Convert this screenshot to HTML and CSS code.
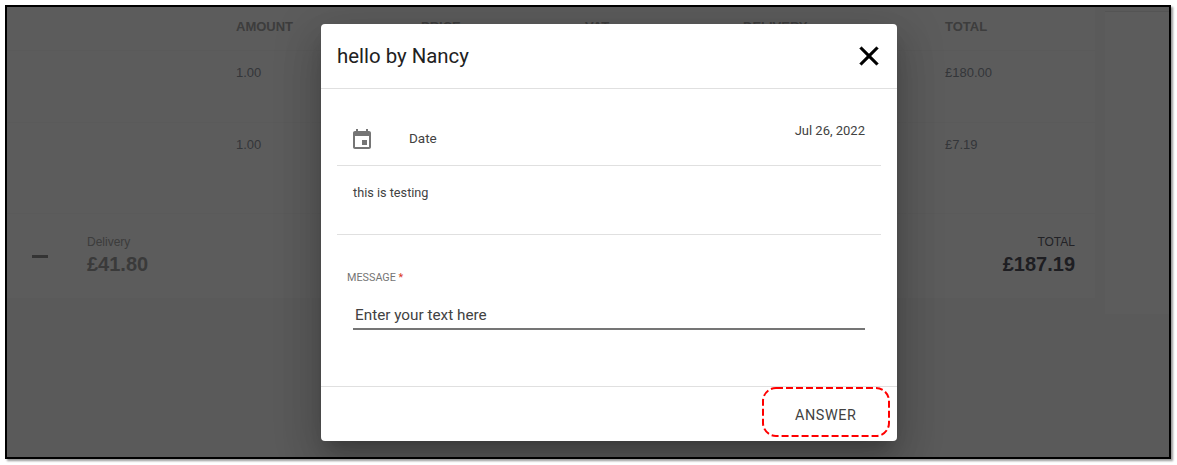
FILE: index.html
```html
<!DOCTYPE html>
<html lang="en">
<head>
<meta charset="utf-8">
<title>Message</title>
<link rel="stylesheet" href="styles.css">
</head>
<body>
<div class="frame">
  <div class="page">
    <main class="card">
      <div class="row row-head">
        <span></span><span>AMOUNT</span><span>PRICE</span><span>VAT</span><span>DELIVERY</span><span>TOTAL</span>
      </div>
      <div class="row row-item">
        <span></span><span>1.00</span><span></span><span></span><span></span><span>£180.00</span>
      </div>
      <div class="row row-item">
        <span></span><span>1.00</span><span></span><span></span><span></span><span>£7.19</span>
      </div>
      <div class="summary">
        <span class="minus"></span>
        <div class="sum-block">
          <div class="sum-label">Delivery</div>
          <div class="sum-value">£41.80</div>
        </div>
        <div class="sum-block sum-total">
          <div class="sum-label">TOTAL</div>
          <div class="sum-value">£187.19</div>
        </div>
      </div>
    </main>
    <aside class="side"></aside>
  </div>
  <div class="overlay"></div>
  <section class="dialog">
    <header class="dialog-head">
      <h2 class="dialog-title">hello by Nancy</h2>
      <svg class="close" viewBox="0 0 24 24"><path d="M19 6.41L17.59 5 12 10.59 6.41 5 5 6.41 10.59 12 5 17.59 6.41 19 12 13.41 17.59 19 19 17.59 13.41 12z"/></svg>
    </header>
    <div class="dialog-body">
      <div class="date-row">
        <svg class="cal" viewBox="0 0 24 24"><path d="M17 12h-5v5h5v-5zM16 1v2H8V1H6v2H5c-1.11 0-1.99.9-1.99 2L3 19c0 1.1.89 2 2 2h14c1.1 0 2-.9 2-2V5c0-1.1-.9-2-2-2h-1V1h-2zm3 18H5V8h14v11z"/></svg>
        <span class="date-label">Date</span>
        <span class="date-value">Jul 26, 2022</span>
      </div>
      <div class="text-row">this is testing</div>
      <div class="field">
        <div class="field-label">MESSAGE <span class="req">*</span></div>
        <div class="field-input">Enter your text here</div>
      </div>
    </div>
    <footer class="dialog-foot">
      <span class="answer">ANSWER</span>
      <svg class="highlight" viewBox="0 0 128 50"><rect x="1" y="1" width="126" height="48" rx="13" ry="13"/></svg>
    </footer>
  </section>
</div>
</body>
</html>
```

FILE: styles.css
```css
* { box-sizing: border-box; }
html, body { margin: 0; height: 100%; overflow: hidden; background: #fff; }
body { padding: 5px 0 0 5px; font-family: Roboto, "Liberation Sans", Arial, sans-serif; }

.frame {
  position: relative;
  width: 1166px;
  height: 454px;
  border: 2px solid #000;
  box-shadow: 2px 2px 2px #999;
  overflow: hidden;
  background: #f9f9f9;
}

.page { display: flex; align-items: flex-start; height: 100%; font-family: "Liberation Sans", Arial, sans-serif; }

.card { width: 1088px; height: 291px; background: #fff; flex: none; }
.side { width: 64px; height: 303px; margin-left: 10px; background: #fff; border-top: 1px solid #e8e8e8; margin-top: 4px; flex: none; }

.row {
  display: grid;
  grid-template-columns: 229px 185px 164px 158px 202px 1fr;
  border-bottom: 1px solid #f8f8f8;
}
.row-head { height: 44px; padding-top: 12px; font-size: 13px; font-weight: 700; color: #a8a8a8; }
.row-item { padding-top: 14px; font-size: 13px; color: #90969f; }
.row-item:nth-child(2) { height: 72px; }
.row-item:nth-child(3) { height: 91px; }

.summary { display: flex; align-items: flex-start; height: 84px; padding: 21px 20px 0 25px; }
.minus { width: 16px; height: 3px; margin-top: 20px; background: #909090; }
.sum-block { margin-left: 39px; }
.sum-label { font-size: 12px; line-height: 14px; color: #a8a8a8; }
.sum-value { margin-top: 4px; font-size: 20px; line-height: 23px; font-weight: 700; color: #a2a2a2; }
.sum-total { margin-left: auto; text-align: right; }
.sum-total .sum-label { color: #60606a; }
.sum-total .sum-value { color: #555560; }

.overlay { position: absolute; inset: 0; background: rgba(0, 0, 0, .64); }

.dialog {
  position: absolute;
  left: 314px;
  top: 17px;
  width: 576px;
  height: 417px;
  display: flex;
  flex-direction: column;
  background: #fff;
  border-radius: 4px;
  box-shadow: 0 11px 15px -7px rgba(0,0,0,.2), 0 24px 38px 3px rgba(0,0,0,.14), 0 9px 46px 8px rgba(0,0,0,.12);
}

.dialog-head {
  flex: none;
  display: flex;
  align-items: center;
  justify-content: space-between;
  height: 65px;
  padding: 0 12px 0 16px;
  border-bottom: 1px solid #e0e0e0;
}
.dialog-title { margin: 0; font-size: 20.4px; font-weight: 400; color: #212121; }
.close { width: 32px; height: 32px; fill: #000; stroke: #000; stroke-width: .4; }

.dialog-body { flex: 1; padding: 0 16px; }

.date-row {
  display: flex;
  align-items: flex-start;
  height: 77px;
  padding: 39px 0 0 13px;
  border-bottom: 1px solid #e0e0e0;
  font-size: 13.5px;
  color: #424242;
}
.cal { width: 24px; height: 24px; fill: #757575; }
.date-label { margin-left: 35px; margin-top: 2px; line-height: 16px; }
.date-value { margin-left: auto; margin-right: 16px; margin-top: -5px; font-size: 13px; line-height: 16px; }

.text-row {
  height: 69px;
  padding: 19px 16px 0;
  border-bottom: 1px solid #e0e0e0;
  font-size: 12.7px;
  line-height: 16px;
  color: #424242;
}

.field { padding: 37px 16px 0 16px; }
.field-label { margin-left: -6px; font-size: 10.8px; line-height: 12px; color: #757575; }
.req { color: #d9381e; }
.field-input {
  margin-top: 16px;
  height: 30px;
  padding: 5px 2px 0;
  border-bottom: 2px solid #757575;
  font-size: 15.3px;
  line-height: 20px;
  color: #424242;
}

.dialog-foot {
  position: relative;
  flex: none;
  display: flex;
  justify-content: flex-end;
  align-items: center;
  height: 55px;
  padding: 2px 41px 0 0;
  border-top: 1px solid #e0e0e0;
}
.answer { font-size: 14.4px; letter-spacing: .6px; margin-right: -.6px; color: #424242; }
.highlight {
  position: absolute;
  left: 441px;
  top: 0;
  width: 128px;
  height: 50px;
  fill: none;
  stroke: #f00;
  stroke-width: 2;
  stroke-dasharray: 7 3;
}
```
